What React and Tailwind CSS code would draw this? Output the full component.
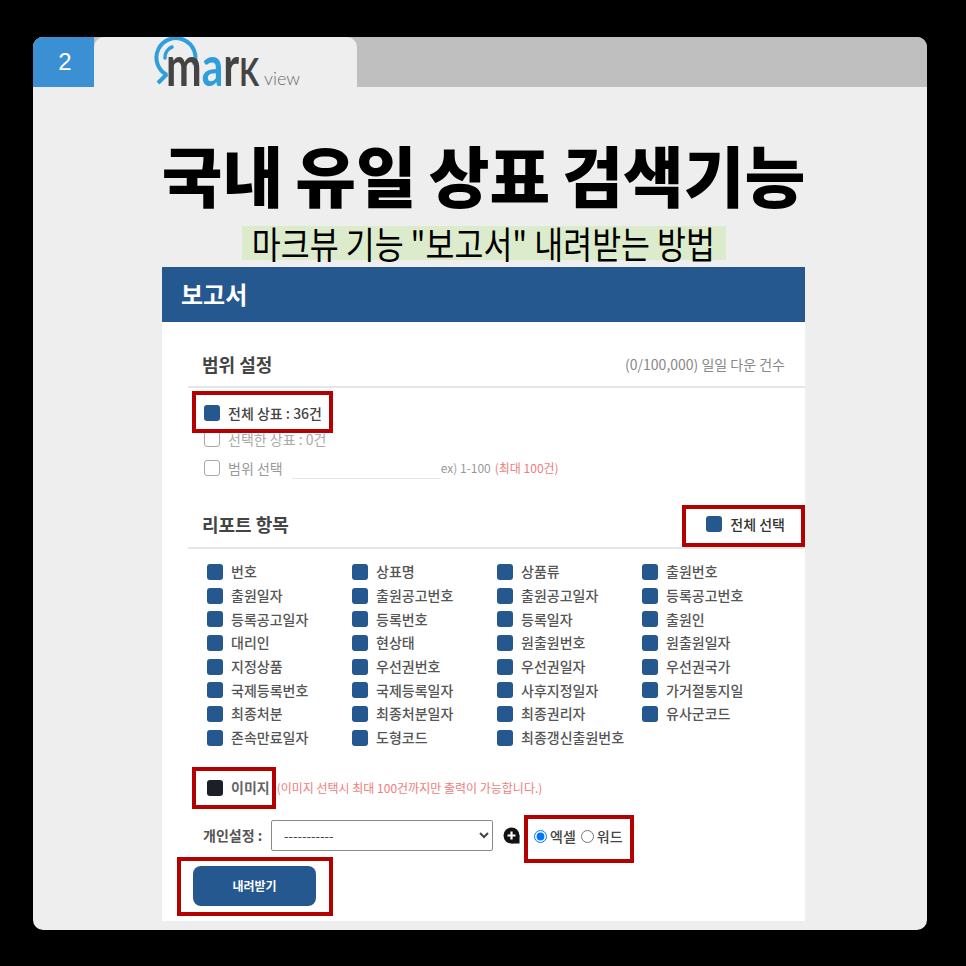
const items = [
  '번호', '상표명', '상품류', '출원번호',
  '출원일자', '출원공고번호', '출원공고일자', '등록공고번호',
  '등록공고일자', '등록번호', '등록일자', '출원인',
  '대리인', '현상태', '원출원번호', '원출원일자',
  '지정상품', '우선권번호', '우선권일자', '우선권국가',
  '국제등록번호', '국제등록일자', '사후지정일자', '가거절통지일',
  '최종처분', '최종처분일자', '최종권리자', '유사군코드',
  '존속만료일자', '도형코드', '최종갱신출원번호'
];

const font = { fontFamily: '"Noto Sans CJK KR", "Noto Sans", sans-serif' };

function Check({ on = true, dark = false }) {
  if (!on) {
    return <span className="block w-4 h-4 shrink-0 rounded-[3px] border border-[#a8a8a8] bg-white" />;
  }
  return <span className={`block w-4 h-4 shrink-0 rounded-[3px] ${dark ? 'bg-[#1c1f26]' : 'bg-[#25588f]'}`} />;
}

function Logo() {
  return (
    <div className="relative w-[150px] h-[50px] ml-[59px]">
      <svg className="absolute left-0 top-0" width="60" height="50" viewBox="0 0 60 50" fill="none">
        <path d="M14 38 A19.5 19.5 0 1 1 41 28" stroke="#2f9fdc" strokeWidth="4" />
        <path d="M12 21 A11 11 0 0 1 19 10" stroke="#2f9fdc" strokeWidth="3.5" strokeLinecap="round" />
        <path d="M14 37 L5 46" stroke="#2f9fdc" strokeWidth="4" />
      </svg>
      <span className="absolute left-[13px] top-[3px] text-[56px] leading-[50px] font-bold text-[#444444] origin-left scale-x-[0.76] [font-family:Lato,sans-serif] whitespace-nowrap">
        m<span className="text-[#2f9fdc]">a</span>r<span className="text-[38px]">K</span>
      </span>
      <span className="absolute left-[111px] top-[31px] text-[18px] leading-[20px] font-light text-[#6b6b6b] [font-family:Lato,sans-serif]">view</span>
    </div>
  );
}

export default function App() {
  return (
    <div className="w-[966px] h-[966px] bg-black pt-[37px] pl-[33px]" style={font}>
      <div className="w-[894px] h-[893px] bg-[#eeeeee] rounded-[10px] flex flex-col items-center">
        <div className="w-full h-[50px] flex bg-[#bfbfbf] rounded-t-[10px] shrink-0">
          <div className="w-[61px] bg-[#3b8fd3] rounded-tl-[10px] text-white text-[24px] flex items-center justify-center [font-family:'Liberation_Sans',sans-serif] pl-[3px]">2</div>
          <div className="w-[263px] bg-[#eeeeee] rounded-t-[10px] relative">
            <Logo />
          </div>
        </div>

        <h1 className="ml-[7px] mt-[51px] h-[70px] text-[66px] leading-[70px] font-black text-black [word-spacing:-3px] whitespace-nowrap">국내 유일 상표 검색기능</h1>

        <div className="ml-[7px] mt-[18px] w-[484px] h-[34px] bg-[#dcebcb] flex items-center justify-center overflow-visible">
          <span className="text-[37px] leading-[34px] text-black whitespace-nowrap scale-x-[0.85]">마크뷰 기능 "보고서" 내려받는 방법</span>
        </div>

        <div className="ml-[7px] relative mt-[7px] w-[643px] h-[654px] bg-white">
          <div className="h-[55px] bg-[#25588f] flex items-center pl-[19px] pb-[2px] text-white text-[24px] font-bold">보고서</div>

          <div className="pl-[26px]">
            <div className="h-[66px] pt-[29px] pl-[14px] pr-[20px] border-b-2 border-[#e6e6e6] flex items-start justify-between">
              <span className="text-[18px] leading-[26px] font-bold text-[#444444]">범위 설정</span>
              <span className="text-[14px] leading-[26px] text-[#888888]">(0/100,000) 일일 다운 건수</span>
            </div>

            <div className="pl-[16px] pt-[15px] text-[14px]">
              <div className="h-[20px] flex items-center gap-[8px] font-medium text-[#444444]"><Check /><span>전체 상표 : 36건</span></div>
              <div className="mt-[6px] h-[20px] flex items-center gap-[8px] text-[#aaaaaa]"><Check on={false} /><span>선택한 상표 : 0건</span></div>
              <div className="mt-[9px] h-[20px] flex items-center text-[#999999]">
                <Check on={false} />
                <span className="ml-[8px]">범위 선택</span>
                <span className="ml-[9px] w-[149px] h-[20px] border-b border-[#e6e6e6] translate-y-[1px]" />
                <span className="text-[12px]">ex) 1-100</span>
                <span className="ml-[4px] text-[12px] text-[#ee7d7d]">(최대 100건)</span>
              </div>
            </div>

            <div className="mt-[22px] h-[49px] pt-[11px] pl-[14px] pr-[20px] border-b-2 border-[#e6e6e6] flex items-start justify-between">
              <span className="text-[18px] leading-[26px] font-bold text-[#444444]">리포트 항목</span>
              <span className="h-[26px] flex items-center gap-[8px] text-[14px] font-medium text-[#333333]"><Check />전체 선택</span>
            </div>

            <div className="pt-[11px] pl-[19px] grid grid-cols-[145px_145px_145px_145px] auto-rows-[23.7px] text-[14px] font-medium text-[#555555]">
              {items.map((label) => (
                <div key={label} className="flex items-center gap-[8px] whitespace-nowrap"><Check /><span>{label}</span></div>
              ))}
            </div>

            <div className="mt-[28px] pl-[19px] h-[20px] flex items-center whitespace-nowrap">
              <Check dark />
              <span className="ml-[8px] text-[14px] font-bold text-[#666666]">이미지</span>
              <span className="ml-[7px] text-[12px] text-[#ee7d7d]">(이미지 선택시 최대 100건까지만 출력이 가능합니다.)</span>
            </div>

            <div className="mt-[22px] pl-[15px] h-[31px] flex items-center whitespace-nowrap">
              <span className="w-[68px] text-[14px] font-bold text-[#555555]">개인설정 :</span>
              <select className="w-[222px] h-[31px] bg-white border border-[#8a8a8a] rounded-[2px] pl-[8px] text-[13px] text-[#444444]" defaultValue="x">
                <option value="x">-----------</option>
              </select>
              <svg className="ml-[10px] shrink-0" width="17" height="17" viewBox="0 0 17 17">
                <path d="M8.5 16.5 H16.5 V8.5 Z" fill="#111111" />
                <circle cx="8.5" cy="8.5" r="8" fill="#111111" />
                <path d="M8.5 4.5 V12.5 M4.5 8.5 H12.5" stroke="#ffffff" strokeWidth="2.2" />
              </svg>
              <label className="ml-[14px] mt-[3px] flex items-center gap-[3px] text-[14px] font-medium text-[#444444]">
                <input type="radio" name="fmt" defaultChecked className="m-0 w-[13px] h-[13px]" />엑셀
              </label>
              <label className="ml-[5px] mt-[3px] flex items-center gap-[3px] text-[14px] font-medium text-[#444444]">
                <input type="radio" name="fmt" className="m-0 w-[13px] h-[13px]" />워드
              </label>
            </div>

            <button className="mt-[15px] ml-[5px] block w-[123px] h-[40px] rounded-[8px] bg-[#25588f] text-white text-[12px] font-bold">내려받기</button>
          </div>

          {/* red annotation boxes */}
          <div className="absolute left-[30px] top-[124px] w-[141px] h-[42px] border-4 border-[#b30000]" />
          <div className="absolute left-[520px] top-[238px] w-[123px] h-[42px] border-4 border-[#b30000]" />
          <div className="absolute left-[30px] top-[500px] w-[84px] h-[42px] border-4 border-[#b30000]" />
          <div className="absolute left-[362px] top-[548px] w-[110px] h-[48px] border-4 border-[#b30000]" />
          <div className="absolute left-[15px] top-[590px] w-[156px] h-[59px] border-4 border-[#b30000]" />
        </div>
      </div>
    </div>
  );
}
